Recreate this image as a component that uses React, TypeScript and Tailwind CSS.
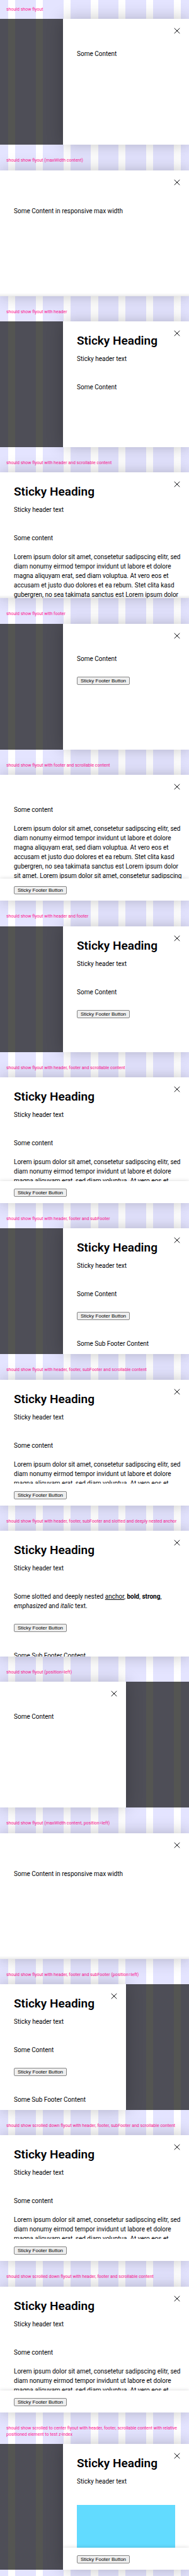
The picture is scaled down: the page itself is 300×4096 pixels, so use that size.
import type { ReactNode } from "react";

const LOREM =
  "Lorem ipsum dolor sit amet, consetetur sadipscing elitr, sed diam nonumy eirmod tempor invidunt ut labore et dolore magna aliquyam erat, sed diam voluptua. At vero eos et accusam et justo duo dolores et ea rebum. Stet clita kasd gubergren, no sea takimata sanctus est Lorem ipsum dolor sit amet. Lorem ipsum dolor sit amet, consetetur sadipscing elitr, sed diam nonumy eirmod tempor invidunt ut labore et dolore.";

type Story = {
  title: string;
  content: ReactNode;
  wide?: boolean;
  left?: boolean;
  header?: boolean;
  footer?: boolean;
  subFooter?: boolean;
  scrollable?: boolean;
  footerShadow?: boolean;
  bottomShadow?: boolean;
};

const some = <p>Some Content</p>;
const responsive = <p className="pt-[9px]">Some Content in responsive max width</p>;
const long = (
  <>
    <p>Some content</p>
    <p className="mt-[15px]">{LOREM}</p>
  </>
);
const rich = (
  <p>
    Some slotted and deeply nested{" "}
    <a href="#anchor" className="underline">
      anchor
    </a>
    , <b className="font-bold">bold</b>, <strong className="font-bold">strong</strong>,{" "}
    <em>emphasized</em> and <i>italic</i> text.
  </p>
);

const stories: Story[] = [
  { title: "should show flyout", content: some },
  { title: "should show flyout (maxWidth content)", content: responsive, wide: true, bottomShadow: true },
  { title: "should show flyout with header", content: some, header: true },
  {
    title: "should show flyout with header and scrollable content",
    content: long,
    wide: true,
    header: true,
    scrollable: true,
    bottomShadow: true,
  },
  { title: "should show flyout with footer", content: some, footer: true },
  {
    title: "should show flyout with footer and scrollable content",
    content: long,
    wide: true,
    footer: true,
    scrollable: true,
    footerShadow: true,
  },
  { title: "should show flyout with header and footer", content: some, header: true, footer: true },
  {
    title: "should show flyout with header, footer and scrollable content",
    content: long,
    wide: true,
    header: true,
    footer: true,
    scrollable: true,
    footerShadow: true,
  },
  {
    title: "should show flyout with header, footer and subFooter",
    content: some,
    header: true,
    footer: true,
    subFooter: true,
  },
  {
    title: "should show flyout with header, footer, subFooter and scrollable content",
    content: long,
    wide: true,
    header: true,
    footer: true,
    scrollable: true,
  },
  {
    title: "should show flyout with header, footer, subFooter and slotted and deeply nested anchor",
    content: rich,
    wide: true,
    header: true,
    footer: true,
    subFooter: true,
  },
  { title: "should show flyout (position=left)", content: some, left: true },
  {
    title: "should show flyout (maxWidth content, position=left)",
    content: responsive,
    wide: true,
    left: true,
    bottomShadow: true,
  },
  {
    title: "should show flyout with header, footer and subFooter (position=left)",
    content: some,
    left: true,
    header: true,
    footer: true,
    subFooter: true,
  },
  {
    title: "should show scrolled down flyout with header, footer, subFooter and scrollable content",
    content: long,
    wide: true,
    header: true,
    footer: true,
    scrollable: true,
  },
  {
    title: "should show scrolled down flyout with header, footer and scrollable content",
    content: long,
    wide: true,
    header: true,
    footer: true,
    scrollable: true,
    footerShadow: true,
  },
  {
    title:
      "should show scrolled to center flyout with header, footer, scrollable content with relative positioned element to test z-index",
    content: <div className="mr-[14px] h-[160px] bg-[#62dbff]" />,
    header: true,
    footer: true,
    scrollable: true,
    footerShadow: true,
  },
];

function CloseButton() {
  return (
    <button type="button" aria-label="Close" className="absolute top-[14px] right-[14px]">
      <svg viewBox="0 0 10 10" className="block size-[10px]" fill="none" stroke="#010205" strokeWidth="0.95">
        <path d="M0.7 0.9 9.3 9.1M9.3 0.9 0.7 9.1" />
      </svg>
    </button>
  );
}

function Flyout({ story }: { story: Story }) {
  const { content, wide, left, header, footer, subFooter, scrollable, footerShadow, bottomShadow } = story;
  return (
    <div
      className={`relative flex h-[200px] shrink-0 bg-[repeating-linear-gradient(to_right,#4e4e57_0_4.375%,#545552_4.375%_8.125%,#4e4e57_8.125%_14.5833%)] ${
        left ? "justify-start" : "justify-end"
      }`}
    >
      <div className={`${wide ? "w-full" : "w-2/3"} shadow-[0_0_25px_rgba(0,0,0,0.24)]`}>
        <div className="relative flex h-full flex-col overflow-hidden bg-white">
          <CloseButton />
          {header ? (
            <header className="shrink-0 px-[22px] pt-[19px] pb-[30px]">
              <h2 className="text-[19px] leading-[24px] font-semibold">Sticky Heading</h2>
              <p className="mt-[9px]">Sticky header text</p>
            </header>
          ) : (
            <div className="h-12 shrink-0" />
          )}
          <div className={`pr-2 pl-[22px] ${scrollable ? "min-h-0 overflow-hidden" : "shrink-0 pb-[9px]"}`}>
            {content}
          </div>
          {footer && (
            <footer
              className={`relative flex shrink-0 bg-white px-[22px] pt-3 pb-[10px] ${
                footerShadow ? "shadow-[0_0_6px_rgba(0,0,0,0.16)]" : ""
              }`}
            >
              <button
                type="button"
                className="h-[13px] rounded-[2px] border border-[#858585] bg-[#efefef] px-[5px] font-['Liberation_Sans',sans-serif] text-[8px] leading-[11px] text-black"
              >
                Sticky Footer Button
              </button>
            </footer>
          )}
          {subFooter && <p className="shrink-0 px-[22px] pt-5">Some Sub Footer Content</p>}
          {bottomShadow && (
            <div className="absolute inset-x-0 bottom-0 h-[5px] bg-linear-to-t from-black/8 to-transparent" />
          )}
        </div>
      </div>
    </div>
  );
}

export default function App() {
  return (
    <main className="flex min-h-screen flex-col overflow-hidden bg-[repeating-linear-gradient(to_right,#e4e4ff_0_4.375%,#fff_4.375%_8.125%,#e4e4ff_8.125%_14.5833%)] pb-[10px] font-[Roboto,sans-serif] text-[10px] leading-[15px] text-[#010205]">
      {stories.map((story, i) => (
        <section key={story.title} className="flex grow flex-col">
          <h1
            className={`grow px-[10px] pb-[10px] text-[7px] leading-[10px] text-[#ff1493] ${
              i === 0 ? "pt-[10px]" : "pt-5"
            }`}
          >
            {story.title}
          </h1>
          <Flyout story={story} />
        </section>
      ))}
    </main>
  );
}
